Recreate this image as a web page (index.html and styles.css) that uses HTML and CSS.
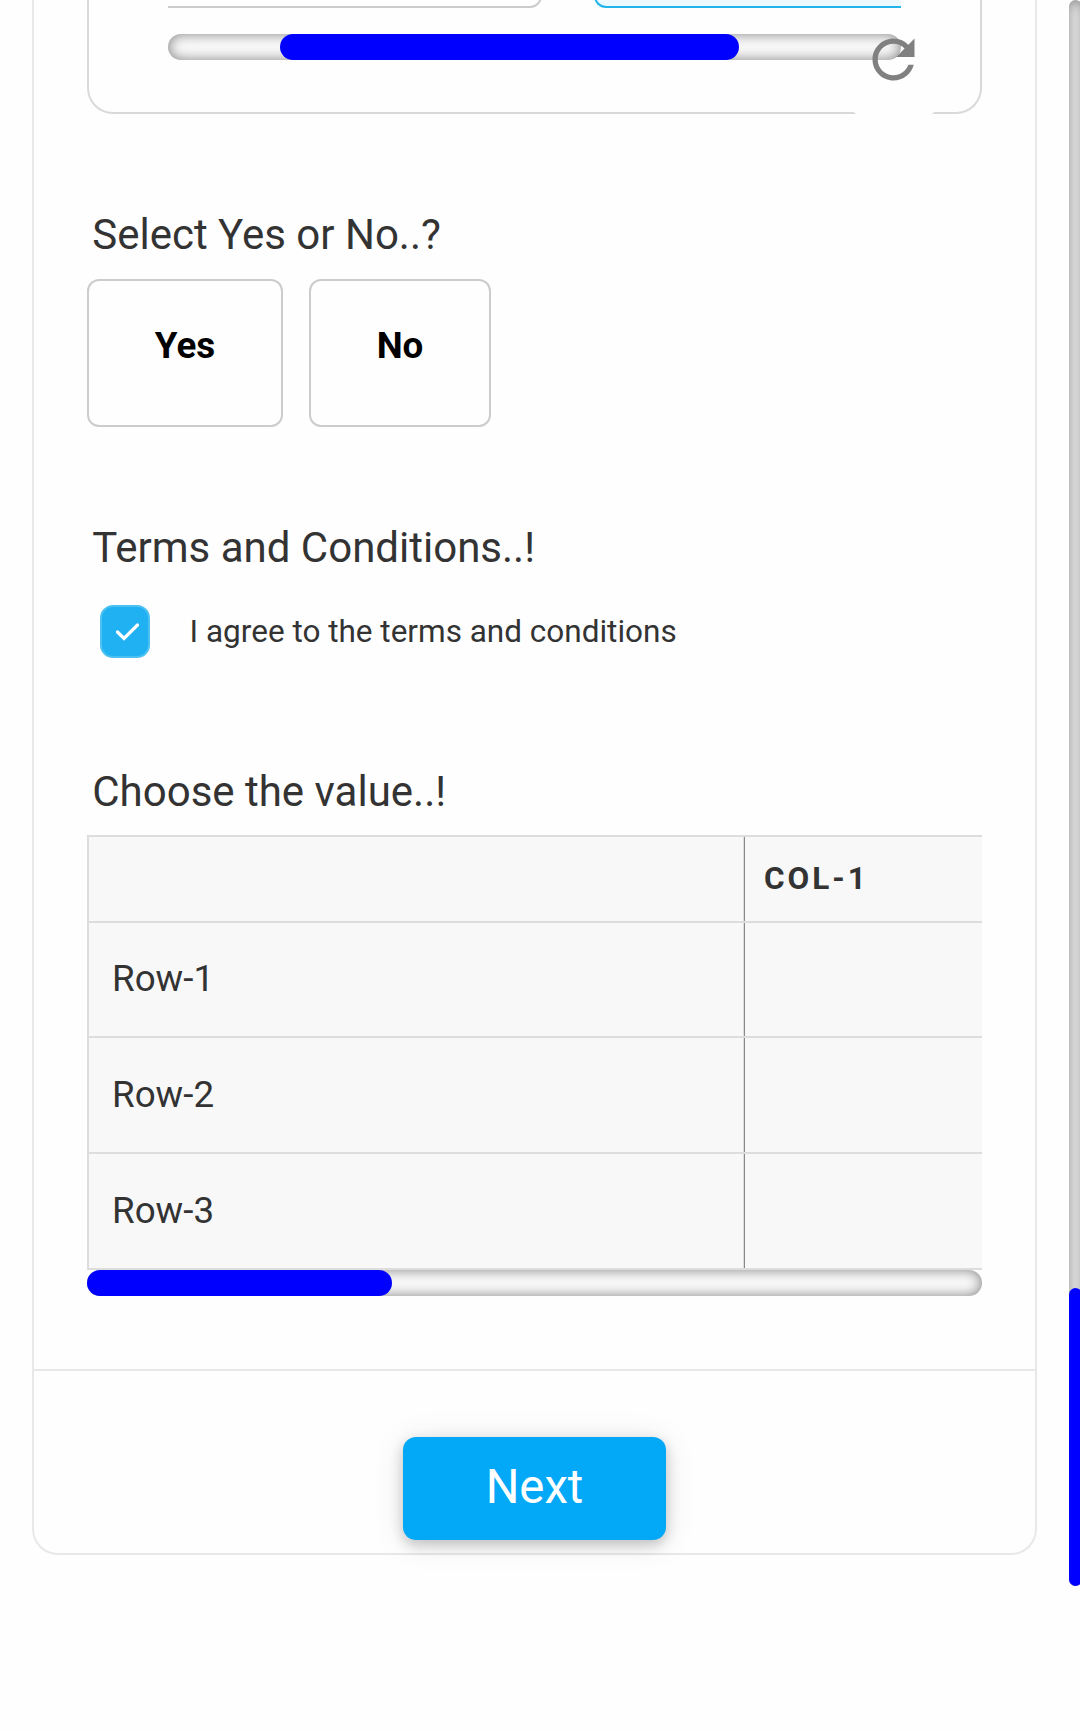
FILE: index.html
```html
<!DOCTYPE html>
<html lang="en">
<head>
<meta charset="utf-8">
<title>Form</title>
<link rel="stylesheet" href="styles.css">
</head>
<body>
<main class="page">
  <form class="card">
    <section class="panel">
      <div class="options">
        <div class="option option-first"></div>
        <div class="option option-selected"></div>
      </div>
      <div class="track track-options"><div class="thumb"></div></div>
      <button class="reset" type="button" aria-label="Reset">
        <svg viewBox="0 0 24 24" width="63" height="63"><path fill="#808080" d="M17.65 6.35A7.958 7.958 0 0 0 12 4c-4.42 0-7.99 3.58-7.99 8s3.57 8 7.99 8c3.73 0 6.84-2.55 7.73-6h-2.08c-.82 2.33-3.04 4-5.65 4-3.31 0-6-2.69-6-6s2.69-6 6-6c1.66 0 3.14.69 4.22 1.78L13 11h7V4l-2.35 2.35z"/></svg>
      </button>
    </section>

    <section class="field field-choice">
      <h2 class="question">Select Yes or No..?</h2>
      <div class="choices">
        <button class="choice choice-yes" type="button">Yes</button>
        <button class="choice choice-no" type="button">No</button>
      </div>
    </section>

    <section class="field field-terms">
      <h2 class="question">Terms and Conditions..!</h2>
      <label class="agree">
        <span class="checkbox">
          <svg viewBox="0 0 46 49" width="46" height="49"><path d="M15.5 25l6.5 6.5 13.5-13.5" fill="none" stroke="#fff" stroke-width="3.2" stroke-linecap="round"/></svg>
        </span>
        <span class="agree-text">I agree to the terms and conditions</span>
      </label>
    </section>

    <section class="field field-matrix">
      <h2 class="question">Choose the value..!</h2>
      <div class="matrix">
        <div class="row row-head"><div class="cell-label"></div><div class="cell cell-head">COL-1</div></div>
        <div class="row row-first"><div class="cell-label">Row-1</div><div class="cell"></div></div>
        <div class="row"><div class="cell-label">Row-2</div><div class="cell"></div></div>
        <div class="row"><div class="cell-label">Row-3</div><div class="cell"></div></div>
      </div>
      <div class="track track-matrix"><div class="thumb"></div></div>
    </section>

    <footer class="actions"><button class="next" type="button">Next</button></footer>
  </form>
  <div class="page-scroll"><div class="page-thumb"></div></div>
</main>
</body>
</html>
```

FILE: styles.css
```css
* { box-sizing: border-box; }

body {
  margin: 0;
  background: #fefefe;
  color: #333;
  font-family: Roboto, "Liberation Sans", sans-serif;
}

.page {
  display: flex;
  align-items: flex-start;
  width: 1080px;
  height: 1731px;
  padding-left: 32px;
  overflow: hidden;
}

.card {
  display: flex;
  flex: none;
  flex-direction: column;
  width: 1005px;
  height: 1555px;
  border: 2px solid #e8e8e8;
  border-top: 0;
  border-radius: 0 0 26px 26px;
}

button {
  margin: 0;
  font-family: inherit;
}

.panel {
  position: relative;
  width: 895px;
  height: 114px;
  margin-left: 53px;
  padding-left: 79px;
  border: 2px solid #d9d9d9;
  border-top: 0;
  border-radius: 0 0 26px 26px;
}

.options {
  position: relative;
  z-index: 1;
  display: flex;
  gap: 52px;
  width: 733px;
  height: 8px;
  overflow: hidden;
}

.option {
  height: 40px;
  margin-top: -32px;
  border: 2px solid #ccc;
}

.option-first {
  width: 374px;
  border-left: 0;
  border-radius: 0 0 12px 0;
}

.option-selected {
  flex: 1;
  border-color: #20b4e8;
  border-right: 0;
  border-radius: 0 0 0 12px;
  background: #ecf9ff;
}

.track {
  height: 26px;
  border-radius: 13px;
  background: #f9f9f9;
  box-shadow: inset 0 0 13px #808080;
}

.thumb {
  height: 26px;
  border-radius: 13px;
  background: #00f;
}

.track-options {
  position: relative;
  z-index: 1;
  width: 733px;
  margin-top: 26px;
}

.track-options .thumb {
  width: 459px;
  margin-left: 112px;
}

.reset {
  position: absolute;
  left: 738.5px;
  top: -7px;
  display: flex;
  align-items: center;
  justify-content: center;
  width: 132px;
  height: 133px;
  padding: 0;
  border: 0;
  border-radius: 50%;
  background: #fefefe;
}

.reset svg {
  position: relative;
  z-index: 2;
}

.field {
  width: 895px;
  margin-left: 53px;
}

.field-choice { margin-top: 96px; }
.field-terms { margin-top: 96px; }
.field-matrix { margin-top: 109px; }

.question {
  height: 50px;
  margin: 0;
  padding-left: 5.25px;
  font-size: 42px;
  font-weight: 400;
  line-height: 50px;
  white-space: nowrap;
}

.choices {
  display: flex;
  gap: 26px;
  margin-top: 19px;
}

.choice {
  height: 148px;
  padding: 0 0 14px;
  border: 2px solid #ccc;
  border-radius: 12px;
  background: transparent;
  color: #000;
  font-size: 36.75px;
  font-weight: 700;
  line-height: 42px;
}

.choice-yes { width: 196px; }
.choice-no { width: 182px; }

.agree {
  display: flex;
  align-items: center;
  gap: 39.6px;
  height: 53px;
  margin-top: 32px;
  padding-left: 13px;
}

.checkbox {
  width: 50px;
  height: 53px;
  border: 2px solid #4cc1f1;
  border-radius: 13px;
  background: #20b1f3;
}

.checkbox svg { display: block; }

.agree-text {
  font-size: 31.5px;
  line-height: 40px;
  white-space: nowrap;
}

.matrix {
  margin-top: 18px;
  border-top: 2px solid #ddd;
  border-left: 2px solid #ddd;
  background: #f8f8f8;
}

.row {
  display: flex;
  height: 116px;
  border-bottom: 2px solid #ddd;
}

.row-head { height: 86px; }
.row-first { height: 115px; }

.cell-label {
  display: flex;
  align-items: center;
  width: 655px;
  padding-left: 23px;
  border-right: 1px solid #ddd;
  font-size: 36.75px;
  line-height: 44px;
}

.row-first .cell-label { padding-bottom: 1px; }

.cell {
  display: flex;
  align-items: center;
  flex: 1;
  padding-left: 19px;
  border-left: 1px solid #888;
}

.cell-head {
  font-size: 31.5px;
  font-weight: 700;
  line-height: 38px;
  letter-spacing: 3px;
}

.track-matrix .thumb { width: 305px; }

.actions {
  display: flex;
  justify-content: center;
  align-items: flex-start;
  height: 184px;
  margin-top: 73px;
  padding-top: 66px;
  border-top: 2px solid #e8e8e8;
}

.next {
  width: 263px;
  height: 103px;
  padding: 0 0 3px;
  border: 0;
  border-radius: 13px;
  background: #03a9f7;
  box-shadow: 0 5px 13px rgba(0, 0, 0, .2), 0 3px 32px rgba(0, 0, 0, .1);
  color: #fff;
  font-size: 47.25px;
  line-height: 56px;
}

.page-scroll {
  display: flex;
  flex: none;
  align-items: flex-end;
  width: 13px;
  height: 1586px;
  margin-left: 32px;
  border-radius: 7px;
  background: #f9f9f9;
  box-shadow: inset 0 0 13px #808080;
}

.page-thumb {
  width: 13px;
  height: 298px;
  border-radius: 7px;
  background: #00f;
}
```
